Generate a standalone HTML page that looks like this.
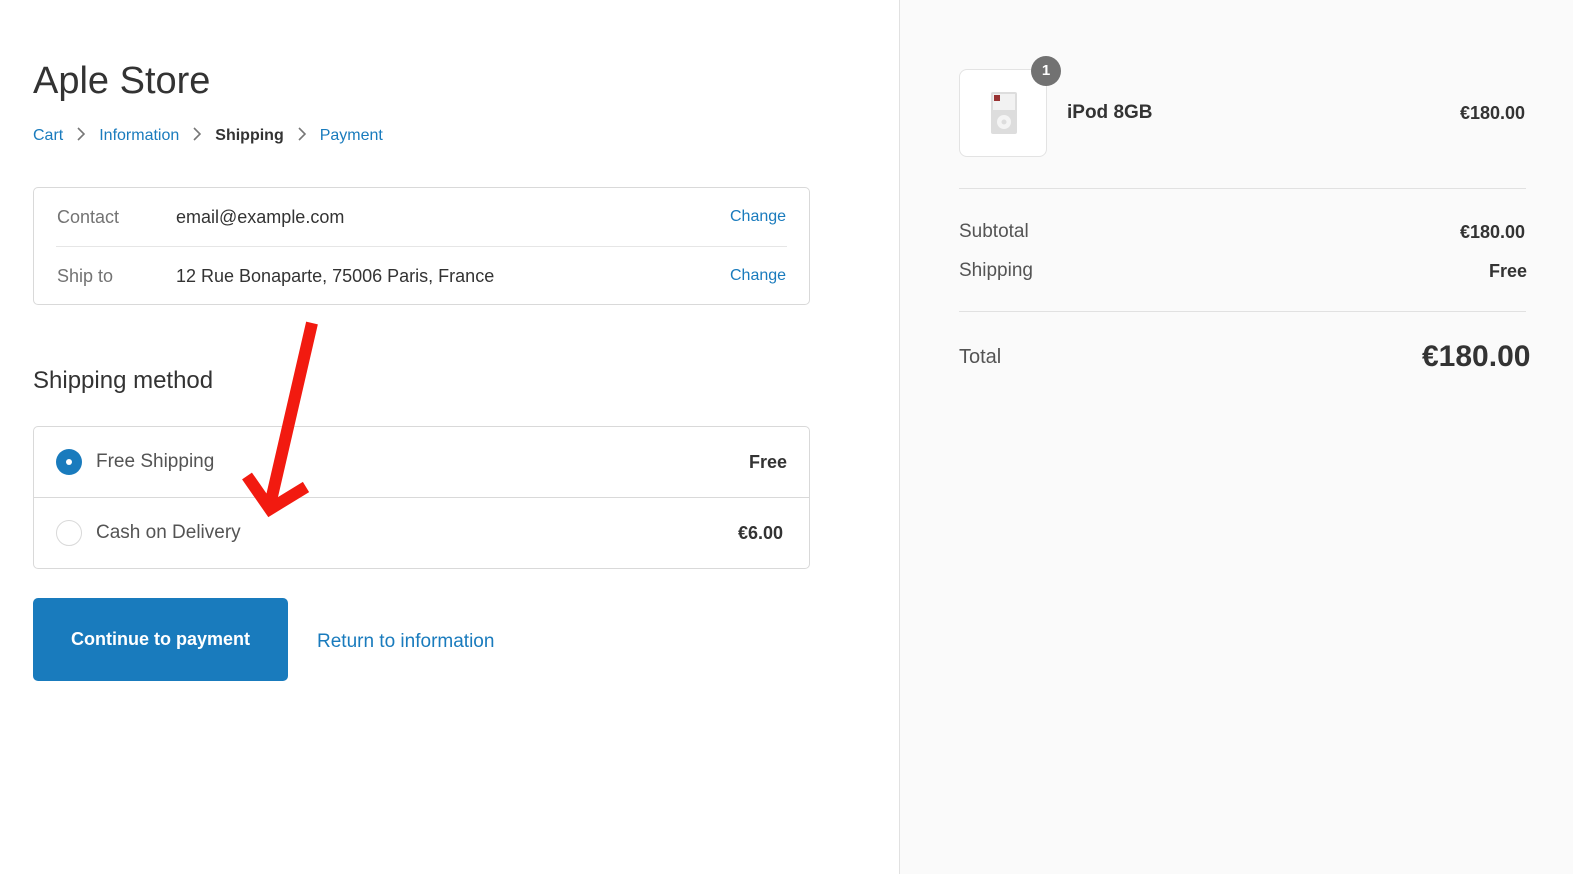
<!DOCTYPE html>
<html><head><meta charset="utf-8"><style>
*{box-sizing:border-box;margin:0;padding:0}
body{width:1573px;height:874px;overflow:hidden;font-family:"Liberation Sans",sans-serif;background:#fff;position:relative;color:#333}
.side{position:absolute;left:899px;top:0;width:674px;height:874px;background:#fafafa;border-left:1px solid #e1e1e1}
.a{position:absolute;white-space:nowrap}
.blue{color:#197bbd}
.box{position:absolute;left:33px;width:777px;border:1px solid #d9d9d9;border-radius:5px}
.chev{display:inline-block;vertical-align:middle;margin:-4px 14px 0 14px}
</style></head><body>
<div class="a" style="left:33px;top:60px;font-size:38px;color:#333">Aple Store</div>
<div class="a" style="left:33px;top:127px;font-size:16px"><span class="blue">Cart</span><svg class="chev" width="8" height="14"><polyline points="1,1 7,7 1,13" fill="none" stroke="#777" stroke-width="1.6"/></svg><span class="blue">Information</span><svg class="chev" width="8" height="14"><polyline points="1,1 7,7 1,13" fill="none" stroke="#777" stroke-width="1.6"/></svg><span style="color:#333;font-weight:bold">Shipping</span><svg class="chev" width="8" height="14"><polyline points="1,1 7,7 1,13" fill="none" stroke="#777" stroke-width="1.6"/></svg><span class="blue">Payment</span></div>

<div class="box" style="top:187px;height:118px">
  <div style="position:absolute;left:22px;right:22px;top:58px;border-top:1px solid #e6e6e6"></div>
</div>
<div class="a" style="left:57px;top:207px;font-size:18px;color:#737373">Contact</div>
<div class="a" style="left:176px;top:207px;font-size:18px;color:#333">email@example.com</div>
<div class="a blue" style="left:730px;top:208px;font-size:16px">Change</div>
<div class="a" style="left:57px;top:266px;font-size:18px;color:#737373">Ship to</div>
<div class="a" style="left:176px;top:266px;font-size:18px;color:#333">12 Rue Bonaparte, 75006 Paris, France</div>
<div class="a blue" style="left:730px;top:267px;font-size:16px">Change</div>

<div class="a" style="left:33px;top:367px;font-size:24px;color:#333">Shipping method</div>
<div class="box" style="top:426px;height:143px">
  <div style="position:absolute;left:0;right:0;top:70px;border-top:1px solid #d9d9d9"></div>
</div>
<div class="a" style="left:56px;top:449px;width:26px;height:26px;border-radius:50%;background:#197bbd"><div style="position:absolute;left:10px;top:10px;width:6px;height:6px;border-radius:50%;background:#fff"></div></div>
<div class="a" style="left:96px;top:451px;font-size:19px;color:#545454">Free Shipping</div>
<div class="a" style="left:749px;top:452px;font-size:18px;font-weight:bold;color:#333">Free</div>
<div class="a" style="left:56px;top:520px;width:26px;height:26px;border-radius:50%;border:1px solid #d9d9d9"></div>
<div class="a" style="left:96px;top:522px;font-size:19px;color:#545454">Cash on Delivery</div>
<div class="a" style="left:738px;top:523px;font-size:18px;font-weight:bold;color:#333">€6.00</div>

<div class="a" style="left:33px;top:598px;width:255px;height:83px;background:#197bbd;border-radius:5px;color:#fff;font-weight:bold;font-size:18px;line-height:83px;text-align:center">Continue to payment</div>
<div class="a blue" style="left:317px;top:631px;font-size:19px">Return to information</div>

<svg class="a" style="left:0;top:0" width="900" height="874"><g stroke="#f21a10" stroke-width="12" fill="none"><line x1="312" y1="323" x2="270" y2="505"/><polyline points="247,476 270,509 306,487" stroke-linejoin="miter"/></g></svg>

<div class="side"></div>
<div class="a" style="left:959px;top:69px;width:88px;height:88px;border:1px solid #e3e3e3;border-radius:8px;background:#fff">
<svg width="88" height="88"><rect x="31" y="22" width="26" height="42" rx="2" fill="#ddd"/><rect x="33" y="24" width="22" height="16" fill="#f2f2f2"/><rect x="34" y="25" width="6" height="6" fill="#933"/><circle cx="44" cy="52" r="7" fill="#f4f4f4"/><circle cx="44" cy="52" r="2.5" fill="#ddd"/></svg></div>
<div class="a" style="left:1031px;top:56px;width:30px;height:30px;border-radius:50%;background:#727272;color:#fff;font-size:15px;font-weight:bold;text-align:center;line-height:30px">1</div>
<div class="a" style="left:1067px;top:102px;font-size:19px;font-weight:bold;color:#333">iPod 8GB</div>
<div class="a" style="left:1460px;top:103px;font-size:18px;font-weight:bold;color:#333">€180.00</div>
<div class="a" style="left:959px;top:188px;width:567px;border-top:1px solid #e1e1e1"></div>
<div class="a" style="left:959px;top:221px;font-size:19px;color:#545454">Subtotal</div>
<div class="a" style="left:1460px;top:222px;font-size:18px;font-weight:bold;color:#333">€180.00</div>
<div class="a" style="left:959px;top:260px;font-size:19px;color:#545454">Shipping</div>
<div class="a" style="left:1489px;top:261px;font-size:18px;font-weight:bold;color:#333">Free</div>
<div class="a" style="left:959px;top:311px;width:567px;border-top:1px solid #e1e1e1"></div>
<div class="a" style="left:959px;top:346px;font-size:20px;color:#545454">Total</div>
<div class="a" style="left:1422px;top:340px;font-size:30px;font-weight:bold;color:#333">€180.00</div>
</body></html>
